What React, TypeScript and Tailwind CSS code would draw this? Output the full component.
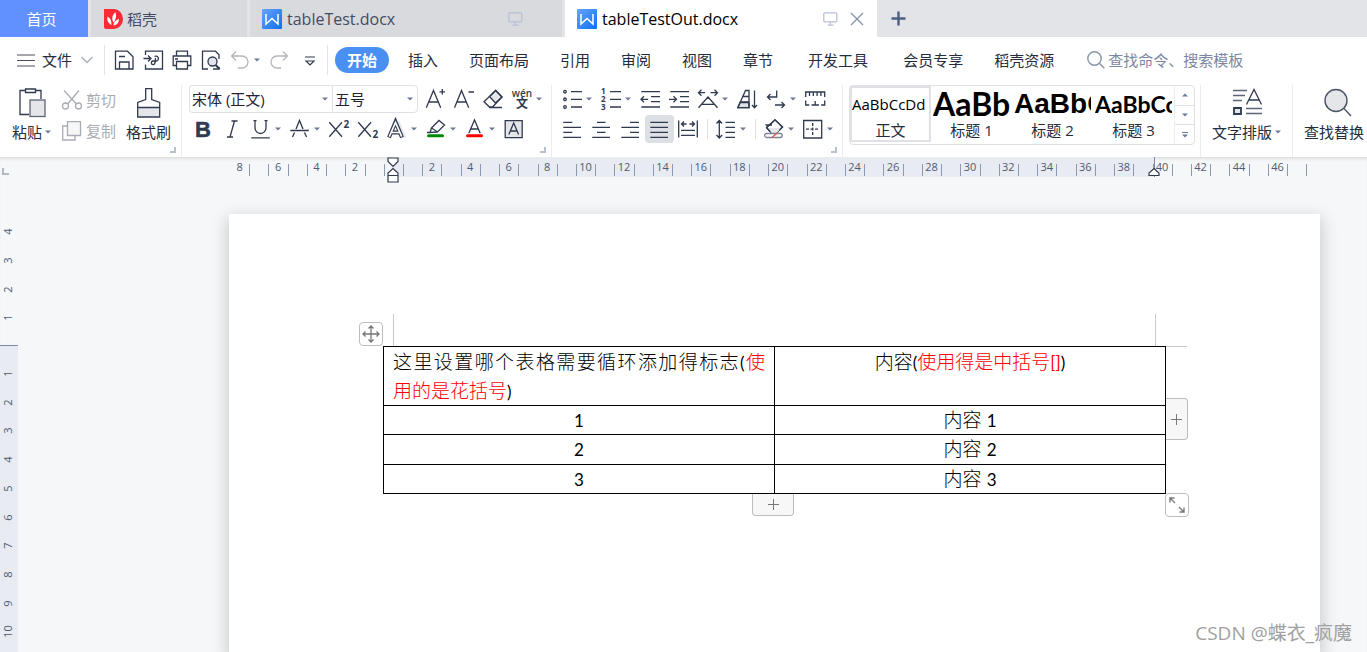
import React from "react";
import clsx from "clsx";

type IconProps = { children: React.ReactNode; className?: string };

function Icon({ children, className }: IconProps) {
  return (
    <svg
      width="20"
      height="20"
      viewBox="0 0 20 20"
      fill="none"
      stroke="currentColor"
      strokeWidth="1.3"
      className={clsx("shrink-0 overflow-visible", className)}
      aria-hidden="true"
    >
      {children}
    </svg>
  );
}

function Caret() {
  return (
    <svg width="6" height="4" viewBox="0 0 6 4" className="shrink-0" aria-hidden="true">
      <path d="M0 0.5h6L3 3.5z" fill="#6b7a99" />
    </svg>
  );
}

type ToolProps = {
  label: string;
  caret?: boolean;
  active?: boolean;
  disabled?: boolean;
  children: React.ReactNode;
};

function Tool({ label, caret, active, disabled, children }: ToolProps) {
  return (
    <button
      aria-label={label}
      className={clsx(
        "flex h-7 items-center rounded-sm pl-1",
        caret ? "w-[39px] gap-1" : "w-[29px]",
        active && "bg-[#dce0e5]",
        disabled ? "text-[#b4b7bd]" : "text-[#303a4f]"
      )}
    >
      <Icon>{children}</Icon>
      {caret && <Caret />}
    </button>
  );
}

function Divider() {
  return <div className="mx-1 h-5 w-px bg-[#dcdfe4]" />;
}

function Group({ children, className }: IconProps) {
  return (
    <section className={clsx("relative h-[72px] shrink-0 border-r border-[#ebedf0]", className)}>
      {children}
    </section>
  );
}

function Corner() {
  return (
    <div className="absolute bottom-[4px] right-[5px] h-[6px] w-[6px] border-b-2 border-r-2 border-[#b9c0cd]" />
  );
}

function DocIcon() {
  return (
    <svg width="20" height="20" viewBox="0 0 20 20" className="shrink-0" aria-hidden="true">
      <defs>
        <linearGradient id="doc" x1="0" y1="0" x2="1" y2="1">
          <stop offset="0" stopColor="#6aa4f8" />
          <stop offset="1" stopColor="#0d6ff0" />
        </linearGradient>
      </defs>
      <rect width="20" height="20" rx="1" fill="url(#doc)" />
      <path d="M4 5v10l6-5.5 6 5.5V5" fill="none" stroke="#fff" strokeWidth="1.5" />
    </svg>
  );
}

function Monitor() {
  return (
    <svg width="15" height="14" viewBox="0 0 15 14" fill="none" stroke="#b7c0d6" strokeWidth="1.3" aria-hidden="true">
      <rect x="0.8" y="0.8" width="13" height="9" rx="1" />
      <path d="M7.3 10v3M4.5 13.2h6" />
    </svg>
  );
}

const menuGroups = [
  ["插入", "页面布局", "引用", "审阅", "视图", "章节"],
  ["开发工具"],
  ["会员专享", "稻壳资源"],
];

function TabBar() {
  return (
    <div className="flex h-[37px] gap-[3px] bg-[#e3e4e8] text-[15px] leading-5 text-[#434c63]">
      <button className="w-[88px] bg-[#6191ff] pr-[5px] text-white">首页</button>
      <button className="flex w-[156px] items-center gap-[3px] bg-[#d9dade] pl-[13px]">
        <svg width="20" height="20" viewBox="0 0 20 20" aria-hidden="true">
          <path d="M0 0h10a9 10 0 0 1 0 20H2a2 2 0 0 1-2-2z" fill="#fb2a35" />
          <path
            d="M9.500 13.500C7.500 10 8 6 11.500 3c1.200 4 .500 7.500-2 10.500zM7.500 16C4 14.500 2.800 11 3.500 7.500c3 1.500 4.300 5 4 8.500zM9.500 16.500c0-3.500 2-5.500 5.500-6.500 0 3.500-2 6-5.500 6.500z"
            fill="#fff"
          />
        </svg>
        稻壳
      </button>
      <button className="flex w-[312px] items-center gap-[5px] bg-[#d9dade] pl-3 pr-[39px] text-base">
        <DocIcon />
        <span className="grow text-left">tableTest.docx</span>
        <Monitor />
      </button>
      <div className="flex w-[312px] items-center bg-white pl-3 pr-[13px] text-base text-black">
        <DocIcon />
        <span className="ml-[5px] grow">tableTestOut.docx</span>
        <Monitor />
        <button aria-label="关闭" className="ml-3">
          <svg width="14" height="14" viewBox="0 0 14 14" stroke="#8793ad" strokeWidth="1.4">
            <path d="M1 1l12 12M13 1L1 13" />
          </svg>
        </button>
      </div>
      <button aria-label="新建" className="ml-[11px]">
        <svg width="15" height="15" viewBox="0 0 15 15" stroke="#4f5f82" strokeWidth="2.4">
          <path d="M7.500 0.500v14M0.500 7.500h14" />
        </svg>
      </button>
    </div>
  );
}

function MenuBar() {
  return (
    <div className="flex h-[46px] items-center overflow-hidden whitespace-nowrap text-[15px] leading-5 text-[#252c3c]">
      <button className="flex items-center pl-[17px]">
        <svg width="18" height="13" viewBox="0 0 18 13" stroke="#4a4f5a" strokeWidth="1.2">
          <path d="M0 1h18M0 6.500h18M0 12h18" />
        </svg>
        <span className="ml-[7px]">文件</span>
        <svg width="12" height="8" viewBox="0 0 12 8" fill="none" stroke="#a9adb5" strokeWidth="1.3" className="ml-[9px]">
          <path d="M0.500 1L6 6.500 11.500 1" />
        </svg>
      </button>
      <div className="ml-[11px] mr-[5px] h-[30px] w-px bg-[#e1e3e7]" />
      <Tool label="保存">
        <path d="M1.500 1.200h12l5.500 5.500v12.300h-17.500z" />
        <path d="M5.500 19v-7h9.500v7M5 6.500h6" />
      </Tool>
      <Tool label="输出为PDF">
        <path d="M2.500 5V1.200h17v17.800h-17v-4.500" />
        <path d="M.500 8.500h7M5 5.500l3 3-3 3" />
        <path d="M11.500 6.500a2.500 2.500 0 1 1 2 4.500H10a1.800 1.800 0 1 0 1.500 3c.700-1.500 1-3.500 1-6" />
      </Tool>
      <Tool label="打印">
        <path d="M4.500 6V1.200h11V6M4.500 15.500H1.200V6h17.600v9.500h-3.300" />
        <path d="M4.500 11.500h11v7.500h-11zM3 9h3" />
      </Tool>
      <Tool label="打印预览">
        <path d="M7 19H1.500V1.200h13l3.500 3.500V9M12 19h6v-2" />
        <circle cx="11.500" cy="11.500" r="4.500" fill="#e2e4e8" />
        <path d="M14.700 15l3.800 4" strokeWidth="2" />
      </Tool>
      <Tool label="撤销" caret disabled>
        <path d="M6 1.500L1.500 6 6 10.500M1.500 6H12a6 6 0 0 1 0 12H8" />
      </Tool>
      <Tool label="恢复" disabled>
        <path d="M14 1.500L18.500 6 14 10.500M18.500 6H8a6 6 0 0 0 0 12h4" />
      </Tool>
      <Tool label="更多">
        <path d="M7 7h10M8 11l4 4 4-4z" strokeWidth="1.200" />
      </Tool>
      <div className="ml-1 mr-[7px] h-[30px] w-px bg-[#e1e3e7]" />
      <button className="h-[26px] w-[54px] rounded-full bg-[#4a90f2] font-bold text-white">开始</button>
      <nav className="ml-[19px] flex gap-[35px]">
        {menuGroups.map((group) => (
          <div key={group[0]} className="flex gap-[31px]">
            {group.map((item) => (
              <button key={item}>{item}</button>
            ))}
          </div>
        ))}
      </nav>
      <label className="ml-[33px] flex items-center gap-[3px] text-[#8793ad]">
        <svg width="18" height="18" viewBox="0 0 18 18" fill="none" stroke="currentColor" strokeWidth="1.4">
          <circle cx="7.500" cy="7.500" r="6.700" />
          <path d="M12.300 12.300l5 5" />
        </svg>
        <input
          aria-label="搜索"
          placeholder="查找命令、搜索模板"
          className="w-40 outline-none placeholder:text-[#7b87a0]"
        />
      </label>
    </div>
  );
}

function Clipboard() {
  return (
    <Group className="flex pl-3 pr-[10px]">
      <button className="flex flex-col items-center gap-1 pt-[3px]">
        <svg width="28" height="30" viewBox="0 0 28 30" fill="none" stroke="#303a4f" strokeWidth="1.3">
          <path d="M7 2.500H2v24h9M18 2.500h5V11" />
          <path d="M7.500 1h10v3.500h-10z" />
          <rect x="12" y="12" width="15" height="16.500" fill="#e4e6e9" stroke="#5c6577" />
        </svg>
        <span className="flex items-center gap-[3px]">
          粘贴
          <Caret />
        </span>
      </button>
      <div className="ml-[11px] flex flex-col gap-[11px] pt-[5px] text-[#a9acb2]">
        <button className="flex items-center gap-1">
          <Icon>
            <path d="M2 .500l12 13M17 .500L6 13.500" />
            <circle cx="3.500" cy="16" r="3" />
            <circle cx="16.500" cy="16" r="3" />
          </Icon>
          剪切
        </button>
        <button className="flex items-center gap-1">
          <Icon>
            <path d="M5.500 5H.700v14h12.300v-4.500" />
            <path d="M5.500 .700h13v13.800h-13z" fill="#f7f7f8" />
          </Icon>
          复制
        </button>
      </div>
      <button className="ml-[10px] flex flex-col items-center gap-1 pt-[3px]">
        <svg width="24" height="30" viewBox="0 0 24 30" fill="none" stroke="#303a4f" strokeWidth="1.300">
          <path d="M.700 19.500h22v9.500H.700z" fill="#e4e6e9" />
          <path d="M.700 19v-4.500l8-3V.700h6v10.800l8 3V19" />
        </svg>
        格式刷
      </button>
      <Corner />
    </Group>
  );
}

type PickerProps = { label: string; value: string; options: string[]; className: string };

function Picker({ label, value, options, className }: PickerProps) {
  return (
    <div className={clsx("relative border border-[#dfe1e6]", className)}>
      <select
        aria-label={label}
        defaultValue={value}
        className="h-[26px] w-full appearance-none bg-transparent pl-[2px] text-[#1f2533] outline-none"
      >
        {options.map((option) => (
          <option key={option}>{option}</option>
        ))}
      </select>
      <span className="pointer-events-none absolute inset-y-0 right-1 flex items-center">
        <Caret />
      </span>
    </div>
  );
}

function FontGroup() {
  return (
    <Group className="pl-[7px] pr-1">
      <div className="flex">
        <Picker label="字体" value="宋体 (正文)" options={["宋体 (正文)", "黑体", "楷体"]} className="w-[143px] rounded-l-sm border-r-0" />
        <Picker label="字号" value="五号" options={["四号", "五号", "六号"]} className="mr-[3px] w-[86px] rounded-r-sm" />
        <Tool label="增大字号">
          <path d="M1.300 18.700L8.500 1.500l7.200 17.200M3.800 13h9.400M14.500 2.800h5.500M17.300 0v5.500" />
        </Tool>
        <Tool label="减小字号">
          <path d="M.500 18.700L7.500 1.500l7.200 17.200M2.800 13h9.400M14.500 3h5.500" />
        </Tool>
        <Tool label="清除格式">
          <path d="M6.500 7.500L12.700 1.500 19 8l-6.500 6z" fill="#e4e6e9" />
          <path d="M12.700 1.500L19 8 9.500 18H6.500L1 12.700zM6 18.500h13" />
        </Tool>
        <Tool label="拼音指南" caret>
          <g fill="currentColor" stroke="none" fontWeight="600" textAnchor="middle">
            <text x="10" y="8" fontSize="10">wén</text>
            <text x="10" y="19" fontSize="12">文</text>
          </g>
        </Tool>
      </div>
      <div className="mt-[2px] flex">
        <Tool label="加粗">
          <text x="10" y="18" fontSize="22" fontWeight="700" fontFamily="Liberation Sans" textAnchor="middle" fill="currentColor" stroke="currentColor" strokeWidth="0.5">
            B
          </text>
        </Tool>
        <Tool label="倾斜">
          <path d="M9.500 2h6M5 18h6M12.500 2L8 18" />
        </Tool>
        <Tool label="下划线" caret>
          <path d="M2.500 1.700h3M13.500 1.700h3M4 1.700V9a5.500 5.500 0 0 0 11 0V1.700M.300 18.800h18.500" />
        </Tool>
        <Tool label="删除线" caret>
          <path d="M2.500 18L4.500 13.500M6 10L9.500 1.500 13 10M14.500 13.500L16.500 18M.300 11.500h18.500" />
        </Tool>
        <Tool label="上标">
          <path d="M.300 3.300L13 17.700M13 3.300L.300 17.700" />
          <text x="14.500" y="8.500" fontSize="10" fontWeight="700" fill="currentColor" stroke="none">2</text>
        </Tool>
        <Tool label="下标">
          <path d="M.300 3.300L13 17.700M13 3.300L.300 17.700" />
          <text x="14.500" y="19" fontSize="10" fontWeight="700" fill="currentColor" stroke="none">2</text>
        </Tool>
        <Tool label="文字效果" caret>
          <path d="M11 2.500l6.500 16" stroke="#e4e6e9" strokeWidth="3" />
          <path d="M2 18.500L8.500 3 15 18.500M5 13.500h7" strokeWidth="4" />
          <path d="M2.300 17.700L8.500 3.500l6.200 14.200M5 13.500h7" stroke="#fff" strokeWidth="1.700" />
        </Tool>
        <Tool label="突出显示" caret>
          <path d="M5.500 9L13 1.500 18.500 6l-7 7zM5.500 9L4 13.500l7.500-.500M4 13.500H1" />
          <path d="M2.500 16.700h14" stroke="#008a00" strokeWidth="3" strokeLinecap="round" />
        </Tool>
        <Tool label="字体颜色" caret>
          <path d="M3.800 14.300L9.500 1l5.700 13.300M5.500 10h8" />
          <path d="M2.500 16.700h14" stroke="#ff0000" strokeWidth="3" strokeLinecap="round" />
        </Tool>
        <Tool label="字符底纹">
          <path d="M1.200 1.700h17v17h-17z" fill="#e4e6e9" />
          <path d="M4.800 15.500L9.700 4l4.900 11.500M6.500 12h6.500" />
        </Tool>
      </div>
      <Corner />
    </Group>
  );
}

function ParagraphGroup() {
  return (
    <Group className="pl-[6px] pr-1">
      <div className="flex">
        <Tool label="项目符号" caret>
          <circle cx="3" cy="2.700" r="1.300" />
          <circle cx="3" cy="10.300" r="1.300" />
          <circle cx="3" cy="18" r="1.300" />
          <path d="M9 2.700h11M9 10.300h11M9 18h11" />
        </Tool>
        <Tool label="编号" caret>
          <g fontSize="8" fontWeight="700" fill="currentColor" stroke="none">
            <text x="0" y="5">1</text>
            <text x="0" y="13">2</text>
            <text x="0" y="21">3</text>
          </g>
          <path d="M9 2.700h11M9 10.300h11M9 18h11" />
        </Tool>
        <Tool label="减少缩进量">
          <path d="M1.300 2.700H20M11 7.700h9M11 12.700h9M1.300 18H20M8 10.300H1M4 7.300l-3 3 3 3" />
        </Tool>
        <Tool label="增加缩进量">
          <path d="M1.300 2.700H20M11 7.700h9M11 12.700h9M1.300 18H20M0 10.300h7.500M4.500 7.300l3 3-3 3" />
        </Tool>
        <Tool label="中文版式" caret>
          <path d="M.500 18.700L10 8l9.500 10.700M3.500 15.300h13M7 3.700H.500M3.500 .700l-3 3 3 3M12.500 3.700H19.500M16.500 .700l3 3-3 3" />
        </Tool>
        <Tool label="排序">
          <path d="M3 13.500h9V18.700H.800z" fill="#dfe1e6" />
          <path d="M.800 18.700L8.500 1.500H12v17.200zM3 13h9M6 7.500h6M17.500 1.500v17M15 16l2.500 2.700L20 16" />
        </Tool>
        <Tool label="显示段落标记" caret>
          <path d="M10.700 1.500V8H1.500M4.500 5l-3 3 3 3M9 16h9.500M15.500 13l3 3-3 3" />
        </Tool>
        <Tool label="制表位">
          <path d="M.700 8V3h19v5M4.500 3v4M8.300 3v4M12.100 3v4M15.900 3v4M.700 11.500V16h3.500M19.700 11.500V16h-3.500M6.500 16h7.500M10.200 12v4" />
        </Tool>
      </div>
      <div className="mt-[2px] flex items-center">
        <Tool label="左对齐">
          <path d="M1.300 3.300h9M1.300 8.300h17.700M1.300 13.300h9M1.300 18.300h17.700" />
        </Tool>
        <Tool label="居中对齐">
          <path d="M6 3.300h8.500M1.300 8.300h17.700M6 13.300h8.500M1.300 18.300h17.700" />
        </Tool>
        <Tool label="右对齐">
          <path d="M10 3.300h9M1.300 8.300h17.700M10 13.300h9M1.300 18.300h17.700" />
        </Tool>
        <Tool label="两端对齐" active>
          <path d="M1.300 3.300h17.700M1.300 8.300h17.700M1.300 13.300h17.700M1.300 18.300h17.700" />
        </Tool>
        <Tool label="分散对齐">
          <path d="M.700 1.500v17M19.300 1.500v17M3 11.300h14M3 16.300h14M3.500 5h5M6 2.500L3.500 5 6 7.500M16.500 5h-5M14 2.500L16.500 5 14 7.500" />
        </Tool>
        <Divider />
        <Tool label="行距" caret>
          <path d="M3.300 1.500v17.500M.500 4.500l2.800-3 2.800 3M.500 16l2.800 3 2.800-3M9.500 3.300h9.500M9.500 8.300h9.500M9.500 13.300h9.500M9.500 18.300h9.500" />
        </Tool>
        <Divider />
        <Tool label="底纹颜色" caret>
          <path d="M2.500 8.500L11 .800l7.500 7.200-6.500 6.500H8z" fill="#fff" />
          <path d="M4 9h13.500l-5.500 5.500H8z" fill="#e4e6e9" stroke="none" />
          <path d="M1.500 6H8M5.500 6L11 .800l7.500 7.200-3 3M2.500 8.500L6 12.500M5.500 6L2.500 8.500" />
          <rect x=".700" y="14.500" width="17.500" height="4" rx="2" fill="#fff" stroke="#7b8496" />
          <path d="M8 18.500l5-4.500" stroke="#f04a4a" />
        </Tool>
        <Tool label="边框" caret>
          <path d="M.700 1.500h18v17.500h-18z" />
          <path d="M9.700 4v13M3 10.200h13.500" strokeDasharray="3 1.500" />
        </Tool>
      </div>
      <Corner />
    </Group>
  );
}

const styleCards = [
  { name: "正文", sample: "font-['Open_Sans'] text-[15px]" },
  { name: "标题 1", sample: "font-['Lato'] text-[32px] font-bold" },
  { name: "标题 2", sample: "font-['Liberation_Sans'] text-[28px] font-bold" },
  { name: "标题 3", sample: "font-['Lato'] text-[23px] font-bold" },
];

function StylesGroup() {
  return (
    <Group className="pl-[6px] pr-[5px]">
      <div className="flex h-[60px] rounded-sm border border-[#dfe1e6]">
        {styleCards.map(({ name, sample }, i) => (
          <button
            key={name}
            className={clsx(
              "h-[56px] w-[81px] border-2",
              i === 0 ? "border-[#dfe1e6]" : "border-transparent"
            )}
          >
            <span className={clsx("flex h-8 items-center overflow-hidden leading-8 text-black", sample)}>AaBbCcDd</span>
            <span className="block leading-5">{name}</span>
          </button>
        ))}
        <div className="flex w-5 flex-col divide-y divide-[#dfe1e6] border-l border-[#ebedf0]">
          <button aria-label="上一行" className="flex flex-1 items-center justify-center">
            <span className="rotate-180">
              <Caret />
            </span>
          </button>
          <button aria-label="下一行" className="flex flex-1 items-center justify-center">
            <Caret />
          </button>
          <button aria-label="更多样式" className="flex flex-1 flex-col items-center justify-center gap-px">
            <span className="h-px w-[6px] bg-[#6b7a99]" />
            <Caret />
          </button>
        </div>
      </div>
    </Group>
  );
}

function Ribbon() {
  return (
    <div className="relative z-10 flex h-[74px] overflow-hidden whitespace-nowrap bg-white pt-[2px] text-[15px] leading-5 text-[#252c3c]">
      <Clipboard />
      <FontGroup />
      <ParagraphGroup />
      <StylesGroup />
      <Group className="px-[11px]">
        <button className="flex flex-col items-center gap-1 pt-[3px]">
          <svg width="32" height="30" viewBox="0 0 32 30" fill="none" stroke="#303a4f" strokeWidth="1.300">
            <path d="M2 2.500h14M2 7.500h12M2 12.500h9M15 25.500h16M15 20.500h16" stroke="#5c6577" />
            <path d="M15.500 16.500L23 1.500l7.500 15M18 12h10" />
            <path d="M3 20h7v6H3z" fill="#e4e6e9" strokeWidth="1.800" />
          </svg>
          <span className="flex items-center gap-[3px]">
            文字排版
            <Caret />
          </span>
        </button>
      </Group>
      <button className="ml-[11px] flex shrink-0 flex-col items-center gap-1 self-start pt-[3px]">
        <svg width="36" height="30" viewBox="0 0 36 30" fill="none" stroke="#4a5366" strokeWidth="1.400">
          <circle cx="20" cy="12.500" r="11" fill="#e4e6e9" />
          <path d="M28 20.500l7 7.500" />
        </svg>
        查找替换
      </button>
    </div>
  );
}

const columns = Array.from({ length: 56 }, (_, i) => i - 8);

function HorizontalRuler() {
  return (
    <div className="flex h-5 text-[11px] text-[#4f5a72]">
      <div className="mt-[11px] ml-[2px] h-[7px] w-[7px] border-b-2 border-l-2 border-[#b5b9c6]" />
      <div className="relative ml-[222px] flex w-[1076px] shrink-0 pt-[2px]">
        <div className="absolute left-[161px] top-0 h-5 w-[763px] border-r border-[#7a89a6] bg-[#e8ebf1]" />
        {columns.map((n) => (
          <div key={n} className="relative flex-1">
            <span className="absolute -left-[5px] -right-[3px] top-0 text-center leading-4">
              {n % 2 === 0 && n !== 0 ? Math.abs(n) : ""}
            </span>
            <div className="absolute right-0 top-[5px] h-3 w-px bg-[#8c99b3]" />
          </div>
        ))}
        <svg width="12" height="27" viewBox="0 0 12 27" fill="#fff" stroke="#303a4f" strokeWidth="1.200" className="absolute left-[156px] top-0">
          <path d="M1 1h10v3.500L6 9.500 1 4.500zM6 11.500L11 16v2.500H1V16zM1 18.500h10V25H1z" />
        </svg>
        <svg width="12" height="20" viewBox="0 0 12 20" fill="#fff" stroke="#303a4f" strokeWidth="1.200" className="absolute left-[917px] top-0">
          <path d="M6 11.500L11 16v2.500H1V16z" />
        </svg>
      </div>
    </div>
  );
}

function VerticalRuler() {
  const cell = "flex flex-1 items-center justify-center rotate-180 [writing-mode:vertical-rl]";
  return (
    <div className="flex w-[18px] shrink-0 flex-col pt-[40px] text-[11px] leading-4 text-[#4f5a72]">
      <div className="mb-[13px] flex h-[115px] flex-col pr-[2px]">
        {[4, 3, 2, 1].map((n) => (
          <div key={n} className={cell}>{n}</div>
        ))}
      </div>
      <div className="grow border-t border-[#7a89a6] bg-[#e8ebf1] pr-[2px] pt-[13px]">
        <div className="flex h-[287px] flex-col">
          {[1, 2, 3, 4, 5, 6, 7, 8, 9, 10].map((n) => (
            <div key={n} className={cell}>{n}</div>
          ))}
        </div>
      </div>
    </div>
  );
}

function Plus() {
  return (
    <svg width="11" height="11" viewBox="0 0 11 11" stroke="#777" strokeWidth="1">
      <path d="M5.500 0v11M0 5.500h11" />
    </svg>
  );
}

const handle = "absolute flex items-center justify-center border border-[#bdbdbd]";

const latin = "text-[17px] font-normal leading-none";

function Page() {
  return (
    <article className="ml-[211px] mt-[37px] w-[1091px] shrink-0 bg-white pl-[154px] pt-[100px] shadow-[0_6px_16px_2px_rgba(0,0,0,0.18)]">
      <div className="ml-[10px] h-8 w-[763px] border-x border-[#c8c8c8]" />
      <div className="relative w-[783px]">
        <table className="h-[148px] w-full table-fixed border-collapse font-['Lato','Noto_Sans_CJK_SC',sans-serif] text-[19px] font-light leading-[29px] text-black [&_td]:border [&_td]:border-black [&_td]:p-0 [&_td]:text-center [&_th]:border [&_th]:border-black [&_th]:px-[9px] [&_th]:py-0 [&_th]:align-top [&_th]:font-light">
          <thead>
            <tr>
              <th className="text-left">
                <span className="block whitespace-nowrap [text-align-last:justify]">
                  这里设置哪个表格需要循环添加得标志<span className={latin}>(</span>
                  <span className="text-[#ff0000]">使</span>
                </span>
                <span className="text-[#ff0000]">用的是花括号</span>
                <span className={latin}>)</span>
              </th>
              <th>
                内容<span className={latin}>(</span>
                <span className="text-[#ff0000]">
                  使用得是中括号<span className={latin}>[]</span>
                </span>
                <span className={latin}>)</span>
              </th>
            </tr>
          </thead>
          <tbody className="leading-7">
            {[1, 2, 3].map((n) => (
              <tr key={n}>
                <td>
                  <span className={latin}>{n}</span>
                </td>
                <td>
                  内容 <span className={latin}>{n}</span>
                </td>
              </tr>
            ))}
          </tbody>
        </table>
        <button aria-label="移动表格" className={clsx(handle, "-left-6 -top-6 h-6 w-6 rounded-sm bg-white")}>
          <svg width="18" height="18" viewBox="0 0 18 18" fill="none" stroke="#777" strokeWidth="1.300">
            <path d="M9 1v16M1 9h16M6.500 3.500L9 1l2.500 2.500M6.500 14.500L9 17l2.500-2.500M3.500 6.500L1 9l2.500 2.500M14.500 6.500L17 9l-2.500 2.500" />
          </svg>
        </button>
        <div className="absolute -right-[21px] top-0 h-px w-[21px] bg-[#c8c8c8]" />
        <button aria-label="添加列" className={clsx(handle, "-right-[22px] top-[52px] h-[42px] w-[22px] rounded-r border-l-0 border-[#a8a8a8] bg-[#f7f7f7]")}>
          <Plus />
        </button>
        <button aria-label="添加行" className={clsx(handle, "-bottom-[22px] left-[369px] h-[22px] w-[42px] rounded-b border-t-0 border-[#a8a8a8] bg-[#f7f7f7]")}>
          <Plus />
        </button>
        <button aria-label="调整表格大小" className={clsx(handle, "-bottom-[23px] -right-[23px] h-6 w-6 rounded-sm bg-white")}>
          <svg width="16" height="16" viewBox="0 0 16 16" fill="none" stroke="#777" strokeWidth="1.300">
            <path d="M1 5.500V1h4.500M1 1l5 5M15 10.500V15h-4.500M15 15l-5-5" />
          </svg>
        </button>
      </div>
    </article>
  );
}

export default function App() {
  return (
    <div className="relative flex h-screen flex-col overflow-hidden bg-white font-['Open_Sans','Noto_Sans_CJK_SC',sans-serif]">
      <TabBar />
      <MenuBar />
      <Ribbon />
      <main className="flex min-h-0 grow flex-col bg-[#f5f7f9] shadow-[inset_0_4px_4px_-3px_rgba(0,0,0,0.15)]">
        <HorizontalRuler />
        <div className="flex grow overflow-hidden">
          <VerticalRuler />
          <Page />
        </div>
      </main>
      <p className="absolute bottom-[7px] right-[15px] text-[19px] leading-6 text-[#a0a0a0]">CSDN @蝶衣_疯魔</p>
    </div>
  );
}
